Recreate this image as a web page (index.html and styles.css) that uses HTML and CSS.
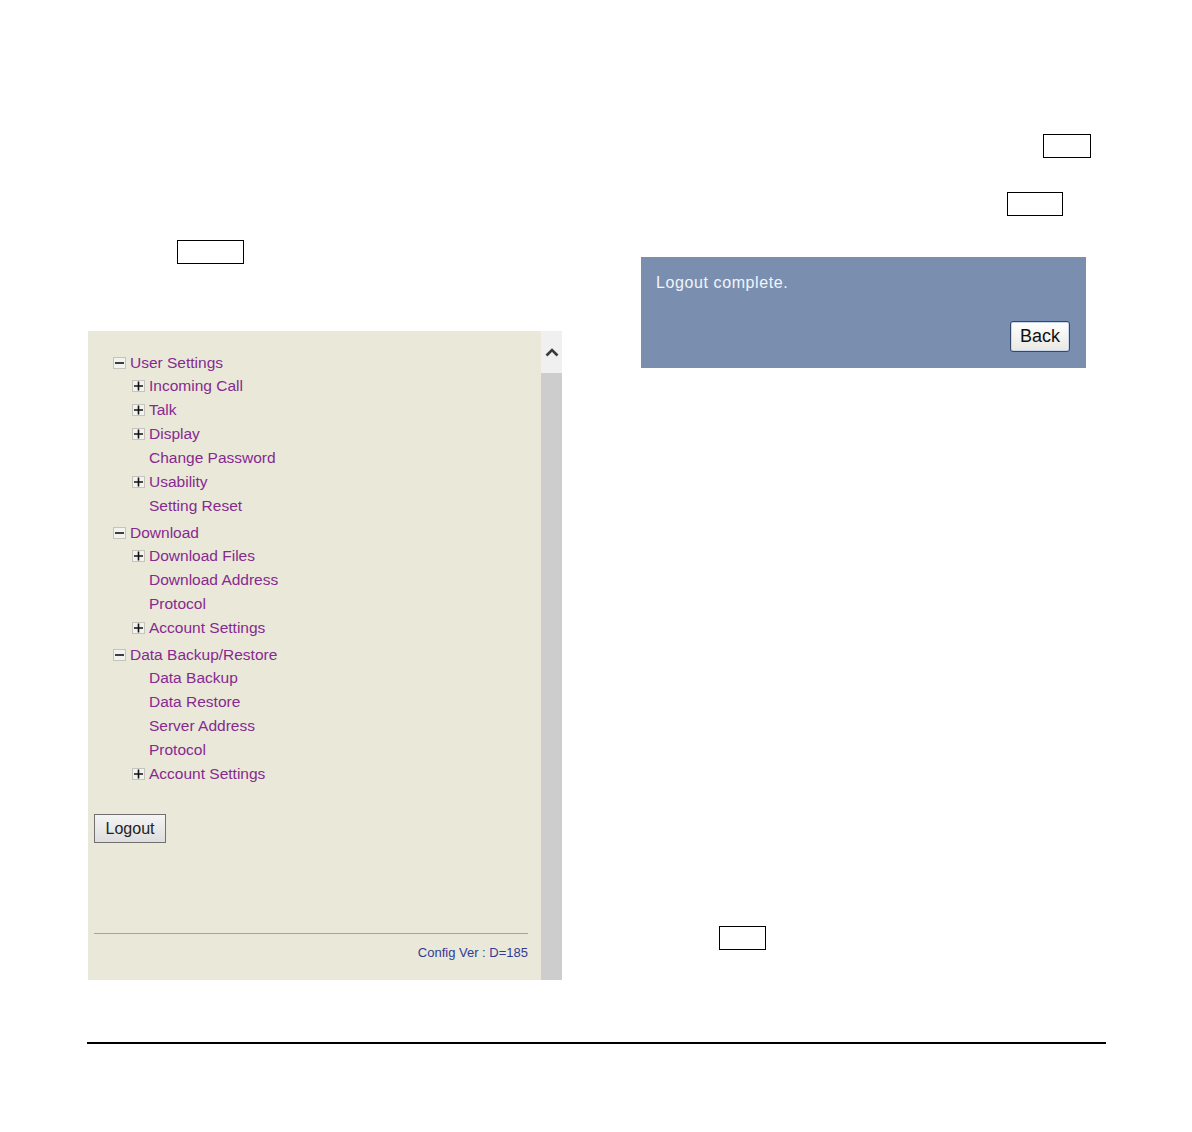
FILE: index.html
```html
<!DOCTYPE html>
<html>
<head>
<meta charset="utf-8">
<link rel="stylesheet" href="styles.css">
</head>
<body>
<div class="page">
  <div class="columns">
    <div class="col-left">
      <div class="key key-a"></div>
      <div class="panel">
        <div class="panel-main">
          <ul class="tree">
            <li class="group">
              <div class="row top"><svg class="ico" viewBox="0 0 13 12"><rect x="0.5" y="0.5" width="12" height="11" fill="#f2f2ee" stroke="#c4c4bc"/><path d="M2 6H11" stroke="#111" stroke-width="1.6"/></svg><span>User Settings</span></div>
              <div class="row child"><svg class="ico" viewBox="0 0 13 12"><rect x="0.5" y="0.5" width="12" height="11" fill="#f2f2ee" stroke="#c4c4bc"/><path d="M2 6H11M6.5 1.5V10.5" stroke="#111" stroke-width="1.6"/></svg><span>Incoming Call</span></div>
              <div class="row child"><svg class="ico" viewBox="0 0 13 12"><rect x="0.5" y="0.5" width="12" height="11" fill="#f2f2ee" stroke="#c4c4bc"/><path d="M2 6H11M6.5 1.5V10.5" stroke="#111" stroke-width="1.6"/></svg><span>Talk</span></div>
              <div class="row child"><svg class="ico" viewBox="0 0 13 12"><rect x="0.5" y="0.5" width="12" height="11" fill="#f2f2ee" stroke="#c4c4bc"/><path d="M2 6H11M6.5 1.5V10.5" stroke="#111" stroke-width="1.6"/></svg><span>Display</span></div>
              <div class="row child leaf"><span>Change Password</span></div>
              <div class="row child"><svg class="ico" viewBox="0 0 13 12"><rect x="0.5" y="0.5" width="12" height="11" fill="#f2f2ee" stroke="#c4c4bc"/><path d="M2 6H11M6.5 1.5V10.5" stroke="#111" stroke-width="1.6"/></svg><span>Usability</span></div>
              <div class="row child leaf"><span>Setting Reset</span></div>
            </li>
            <li class="group">
              <div class="row top"><svg class="ico" viewBox="0 0 13 12"><rect x="0.5" y="0.5" width="12" height="11" fill="#f2f2ee" stroke="#c4c4bc"/><path d="M2 6H11" stroke="#111" stroke-width="1.6"/></svg><span>Download</span></div>
              <div class="row child"><svg class="ico" viewBox="0 0 13 12"><rect x="0.5" y="0.5" width="12" height="11" fill="#f2f2ee" stroke="#c4c4bc"/><path d="M2 6H11M6.5 1.5V10.5" stroke="#111" stroke-width="1.6"/></svg><span>Download Files</span></div>
              <div class="row child leaf"><span>Download Address</span></div>
              <div class="row child leaf"><span>Protocol</span></div>
              <div class="row child"><svg class="ico" viewBox="0 0 13 12"><rect x="0.5" y="0.5" width="12" height="11" fill="#f2f2ee" stroke="#c4c4bc"/><path d="M2 6H11M6.5 1.5V10.5" stroke="#111" stroke-width="1.6"/></svg><span>Account Settings</span></div>
            </li>
            <li class="group">
              <div class="row top"><svg class="ico" viewBox="0 0 13 12"><rect x="0.5" y="0.5" width="12" height="11" fill="#f2f2ee" stroke="#c4c4bc"/><path d="M2 6H11" stroke="#111" stroke-width="1.6"/></svg><span>Data Backup/Restore</span></div>
              <div class="row child leaf"><span>Data Backup</span></div>
              <div class="row child leaf"><span>Data Restore</span></div>
              <div class="row child leaf"><span>Server Address</span></div>
              <div class="row child leaf"><span>Protocol</span></div>
              <div class="row child"><svg class="ico" viewBox="0 0 13 12"><rect x="0.5" y="0.5" width="12" height="11" fill="#f2f2ee" stroke="#c4c4bc"/><path d="M2 6H11M6.5 1.5V10.5" stroke="#111" stroke-width="1.6"/></svg><span>Account Settings</span></div>
            </li>
          </ul>
          <button class="btn-logout">Logout</button>
          <div class="rule"></div>
          <div class="config">Config Ver : D=185</div>
        </div>
        <div class="scrollbar">
          <div class="scroll-up"><svg viewBox="0 0 14 10" width="14" height="10"><path d="M1.5 8.5L7 3L12.5 8.5" fill="none" stroke="#3a3a3a" stroke-width="2.6"/></svg></div>
          <div class="scroll-thumb"></div>
        </div>
      </div>
    </div>
    <div class="col-right">
      <div class="key key-b"></div>
      <div class="key key-c"></div>
      <div class="notice">
        <div class="notice-text">Logout complete.</div>
        <button class="btn-back">Back</button>
      </div>
      <div class="key key-d"></div>
    </div>
  </div>
  <div class="footer-line"></div>
</div>
</body>
</html>
```

FILE: styles.css
```css
html, body {
  margin: 0;
  padding: 0;
  background: #ffffff;
}

body {
  font-family: "Liberation Sans", Arial, sans-serif;
}

.page {
  width: 1192px;
  height: 1132px;
  padding-top: 134px;
  box-sizing: border-box;
}

.columns {
  display: grid;
  grid-template-columns: 474px 450px;
  column-gap: 79px;
  margin-left: 88px;
  align-items: start;
}

.key {
  border: 1px solid #000;
  box-sizing: border-box;
  height: 24px;
  background: #fff;
}

.key-a {
  margin-top: 106px;
  margin-left: 89px;
  width: 67px;
}

.key-b {
  margin-left: 402px;
  width: 48px;
}

.key-c {
  margin-top: 34px;
  margin-left: 366px;
  width: 56px;
}

.key-d {
  margin-top: 558px;
  margin-left: 78px;
  width: 47px;
}

/* Panel */
.panel {
  margin-top: 67px;
  width: 474px;
  height: 649px;
  display: flex;
  background: #eae8d9;
}

.panel-main {
  flex: 1;
  display: flex;
  flex-direction: column;
  padding: 20px 13px 0 6px;
}

.tree {
  list-style: none;
  margin: 0;
  padding: 0 0 0 19px;
}

.group + .group {
  margin-top: 3px;
}

.row {
  display: flex;
  align-items: center;
  font-size: 15.5px;
  color: #862a90;
  white-space: nowrap;
}

.row.top {
  height: 23px;
}

.row.child {
  height: 24px;
  padding-left: 19px;
}

.row.leaf {
  padding-left: 36px;
}

.ico {
  width: 13px;
  height: 12px;
  margin-right: 4px;
  flex: none;
}

.btn-logout {
  align-self: flex-start;
  margin-top: 28px;
  width: 72px;
  height: 29px;
  border: 1px solid #707070;
  border-radius: 0;
  background: linear-gradient(#f4f4f4, #dedede);
  font-family: "Liberation Sans", Arial, sans-serif;
  font-size: 16px;
  color: #222;
  padding: 0;
}

.rule {
  margin-top: 90px;
  height: 1px;
  background: #a3a3a0;
}

.config {
  margin-top: 11px;
  text-align: right;
  font-size: 13px;
  line-height: 16px;
  color: #333a96;
}

.scrollbar {
  width: 21px;
  display: flex;
  flex-direction: column;
}

.scroll-up {
  height: 42px;
  background: #f0f0f0;
  display: flex;
  align-items: center;
  justify-content: center;
}

.scroll-thumb {
  flex: 1;
  background: #cdcdcd;
}

/* Notice */
.notice {
  margin-top: 41px;
  width: 445px;
  height: 111px;
  box-sizing: border-box;
  background: #7a8fb0;
  padding: 16px 16px 16px 15px;
  display: flex;
  flex-direction: column;
}

.notice-text {
  font-size: 16px;
  line-height: 20px;
  letter-spacing: 0.6px;
  color: #f2f5fb;
}

.btn-back {
  margin-top: auto;
  align-self: flex-end;
  width: 60px;
  height: 31px;
  border: 1px solid #34486a;
  border-radius: 3px;
  background: linear-gradient(#ffffff, #e9e8e2);
  box-shadow: inset 0 0 0 1px #c9d6ea;
  font-family: "Liberation Sans", Arial, sans-serif;
  font-size: 18px;
  color: #111;
  padding: 0;
}

.footer-line {
  margin-top: 62px;
  margin-left: 87px;
  width: 1019px;
  height: 2px;
  background: #000;
}
```
